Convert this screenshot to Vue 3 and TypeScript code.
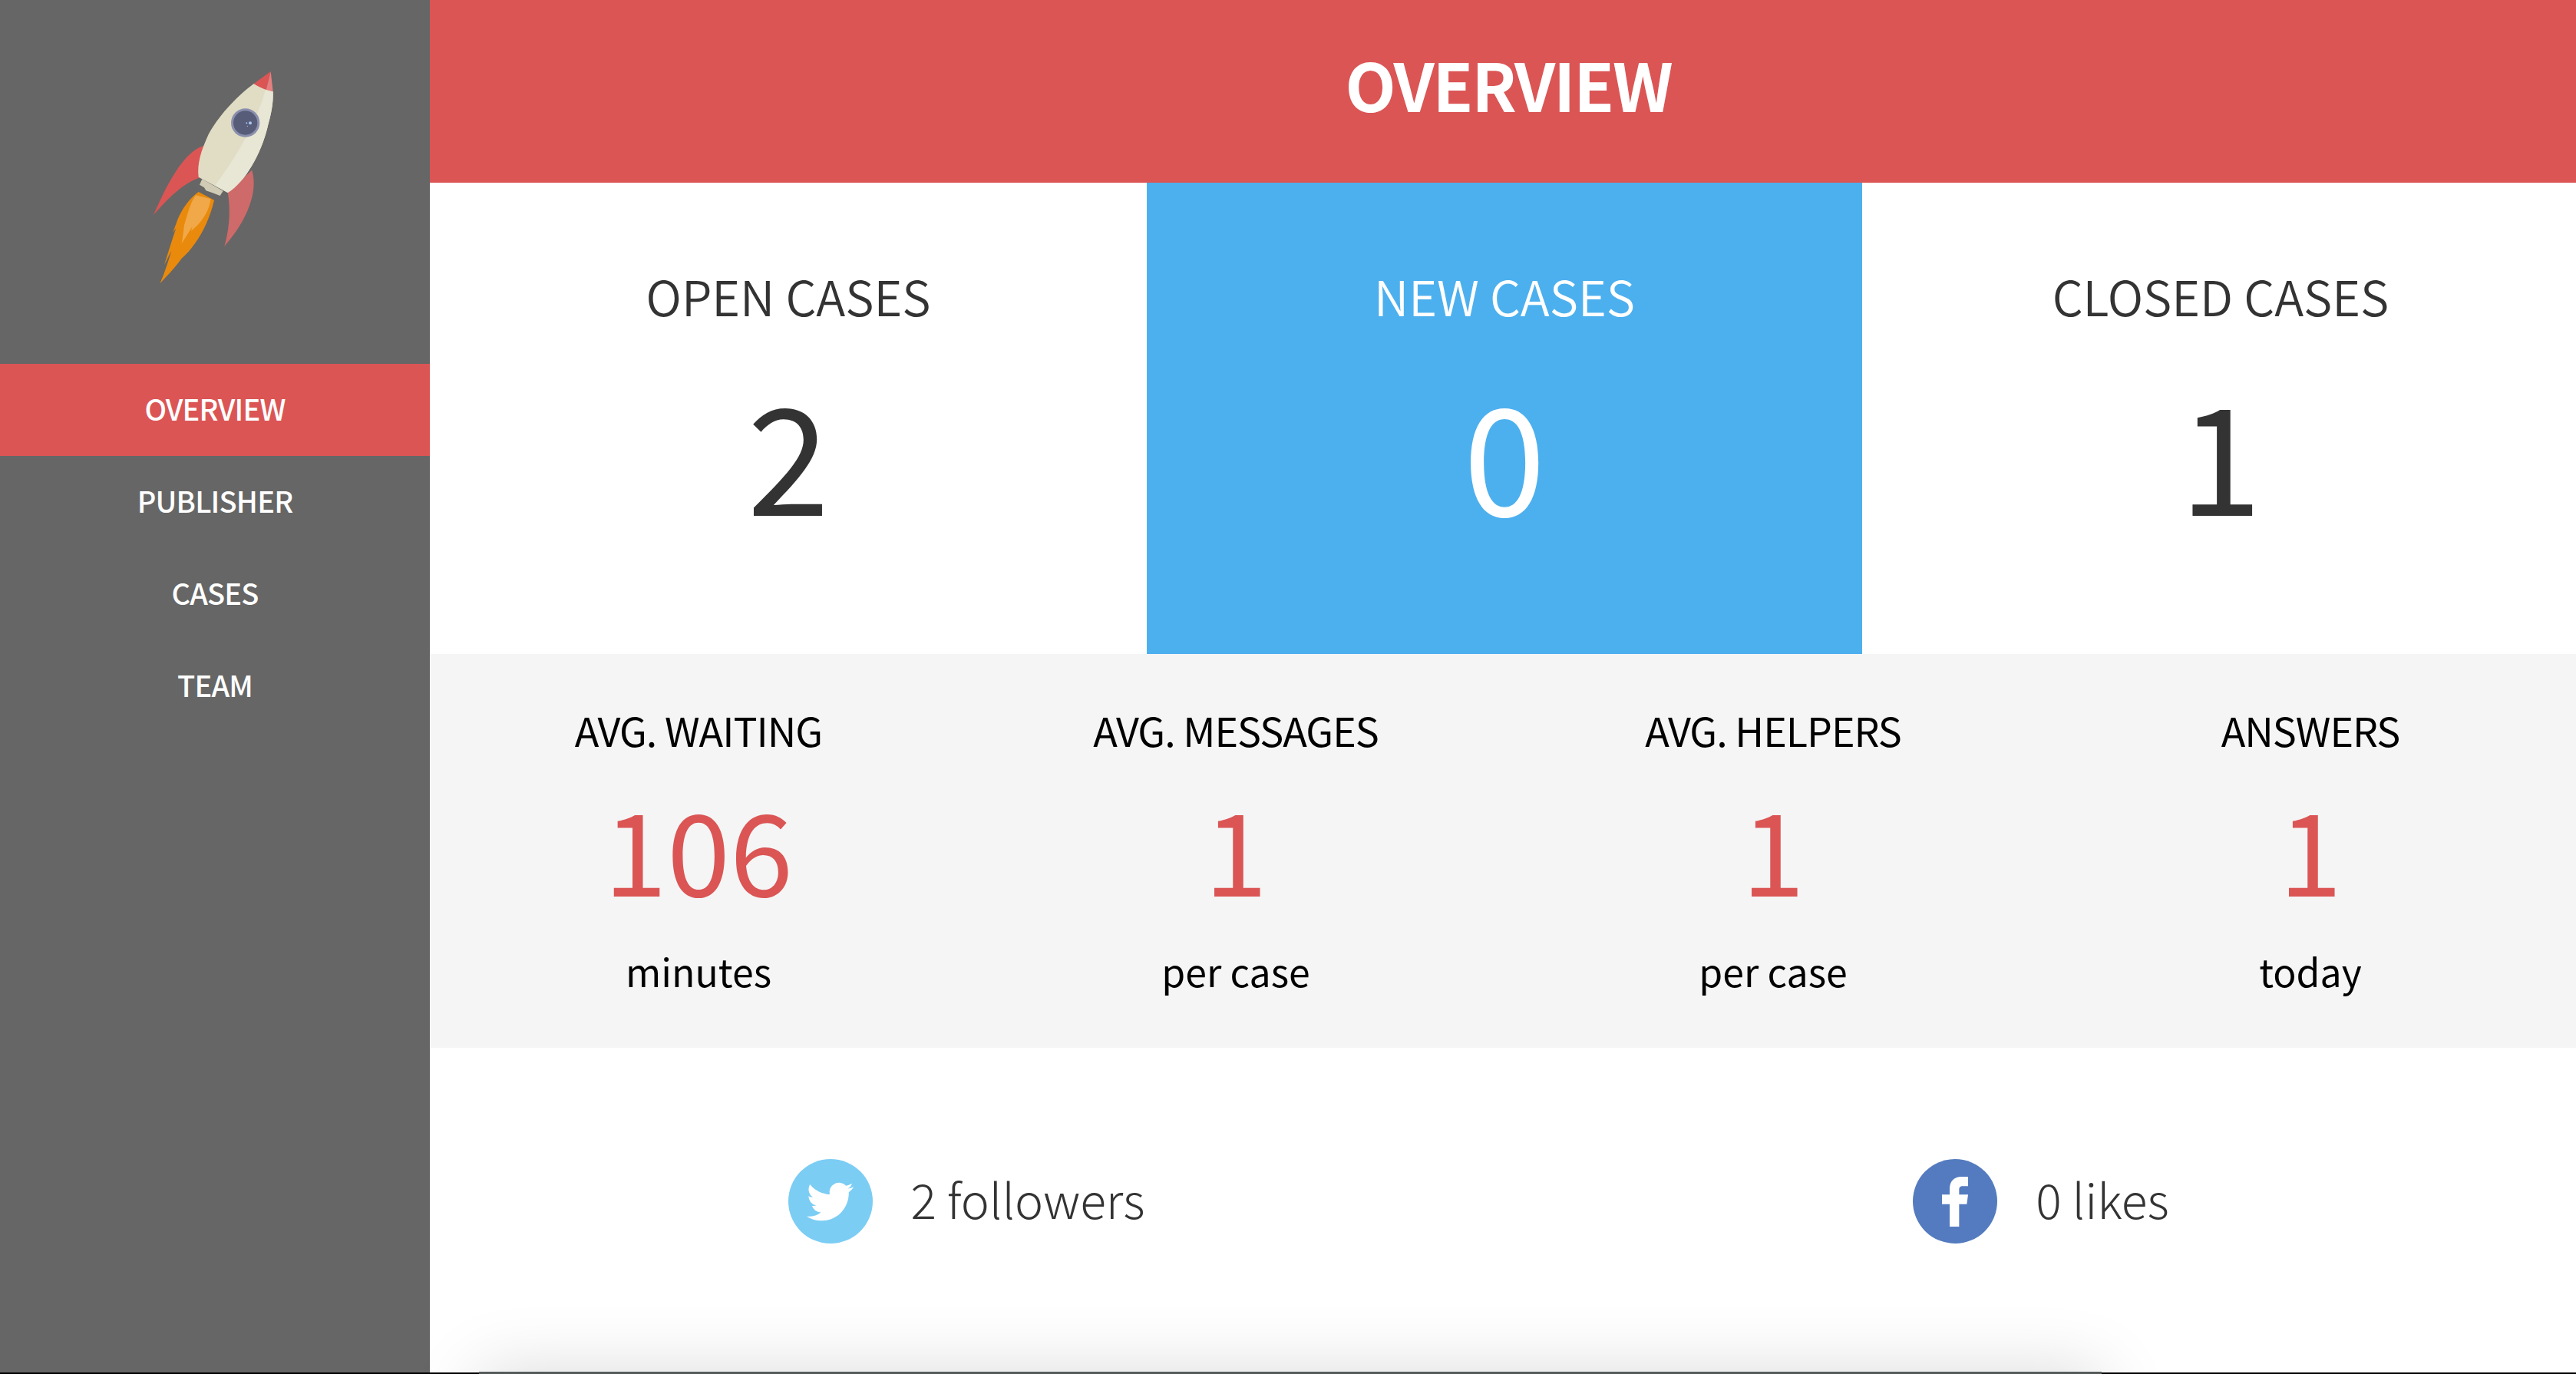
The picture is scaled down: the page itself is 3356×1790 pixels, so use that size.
<template>
  <div class="page">
    <div class="layout">
      <aside class="sidebar">
        <svg class="rocket" viewBox="0 0 840 990" width="280" height="330">
          <path d="M375 390C310 410 250 500 180 660C240 590 300 535 358 515Z" fill="#db5555" />
          <path d="M565 485C580 540 570 600 535 670C510 720 480 755 457 783C480 700 480 630 470 570Z" fill="#cf6a6a" />
          <path d="M356 570C315 600 285 645 268 695L255 730L268 712C255 750 240 800 222 855L250 800C235 850 220 895 205 928C240 890 270 860 300 815L310 785L285 835C340 790 395 700 417 602Z" fill="#e98a0c" />
          <path d="M345 583C325 610 315 650 300 700C297 725 295 745 290 772L332 705L327 722C370 690 400 640 403 597Z" fill="#f0a848" />
          <path d="M370 520L360 542L378 553L385 565L411 574L440 585L452 566Z" fill="#cfcbb5" />
          <path d="M572 147C500 200 430 280 395 345C365 410 350 460 356 512L470 573C540 530 600 420 625 320C645 250 648 215 647 178C625 170 595 160 572 147Z" fill="#e1ddc5" />
          <path d="M618 170C590 270 530 400 420 545L470 573C540 530 600 420 625 320C645 250 648 215 647 178Z" fill="#e8e6d4" />
          <path d="M638 99L572 147C590 160 605 165 620 171Z" fill="#db5555" />
          <path d="M638 99L620 171L647 178Z" fill="#e67f7f" />
          <circle cx="539" cy="300" r="56" fill="#8a8fad" />
          <circle cx="539" cy="300" r="47" fill="#575c78" />
          <circle cx="558" cy="301" r="6" fill="#a9c6f0" />
          <circle cx="544" cy="301" r="3" fill="#a9c6f0" />
          <circle cx="547" cy="313" r="2" fill="#a9c6f0" />
        </svg>
        <nav class="menu">
          <a
            v-for="item in menu"
            :key="item"
            class="menu-item"
            :class="{ active: item === 'OVERVIEW' }"
          >
            {{ item }}
          </a>
        </nav>
      </aside>

      <main class="main">
        <header class="title-bar">
          <h1>OVERVIEW</h1>
        </header>

        <section class="cases">
          <div
            v-for="c in cases"
            :key="c.label"
            class="case"
            :class="{ highlight: c.highlight }"
          >
            <div class="case-label">{{ c.label }}</div>
            <div class="case-value">{{ c.value }}</div>
          </div>
        </section>

        <section class="stats">
          <div v-for="s in stats" :key="s.label" class="stat">
            <div class="stat-label">{{ s.label }}</div>
            <div class="stat-value">{{ s.value }}</div>
            <div class="stat-unit">{{ s.unit }}</div>
          </div>
        </section>

        <section class="social">
          <div class="social-item">
            <span class="badge twitter">
              <svg viewBox="0 0 24 24" width="61" height="61" fill="#fff">
                <path d="M23.953 4.57a10 10 0 01-2.825.775 4.958 4.958 0 002.163-2.723c-.951.555-2.005.959-3.127 1.184a4.92 4.92 0 00-8.384 4.482C7.69 8.095 4.067 6.13 1.64 3.162a4.822 4.822 0 00-.666 2.475c0 1.71.87 3.213 2.188 4.096a4.904 4.904 0 01-2.228-.616v.06a4.923 4.923 0 003.946 4.827 4.996 4.996 0 01-2.212.085 4.936 4.936 0 004.604 3.417 9.867 9.867 0 01-6.102 2.105c-.39 0-.779-.023-1.17-.067a13.995 13.995 0 007.557 2.209c9.053 0 13.998-7.496 13.998-13.985 0-.21 0-.42-.015-.63A9.935 9.935 0 0024 4.59z" />
              </svg>
            </span>
            <span class="social-text">2 followers</span>
          </div>
          <div class="social-item">
            <span class="badge facebook">
              <svg viewBox="0 0 102 195" width="34" height="65" fill="#fff">
                <path d="M30 70V48C30 15 50 0 75 0H102V37H82C70 37 67 42 67 52V70H102L97 107H67V195H30V107H0V70Z" />
              </svg>
            </span>
            <span class="social-text">0 likes</span>
          </div>
        </section>

        <div class="next-panel"></div>
      </main>
    </div>
  </div>
</template>

<script setup lang="ts">
interface CaseCard {
  label: string;
  value: number;
  highlight?: boolean;
}

interface Stat {
  label: string;
  value: number;
  unit: string;
}

const menu: string[] = ["OVERVIEW", "PUBLISHER", "CASES", "TEAM"];

const cases: CaseCard[] = [
  { label: "OPEN CASES", value: 2 },
  { label: "NEW CASES", value: 0, highlight: true },
  { label: "CLOSED CASES", value: 1 },
];

const stats: Stat[] = [
  { label: "AVG. WAITING", value: 106, unit: "minutes" },
  { label: "AVG. MESSAGES", value: 1, unit: "per case" },
  { label: "AVG. HELPERS", value: 1, unit: "per case" },
  { label: "ANSWERS", value: 1, unit: "today" },
];
</script>

<style>
html,
body {
  margin: 0;
  background: #000;
}
</style>

<style scoped>
.page {
  width: 3356px;
  height: 1790px;
  overflow: hidden;
  background: #000;
  font-family: "Noto Sans CJK SC", "Noto Sans", sans-serif;
}

.layout {
  display: flex;
  height: 1788px;
}

.sidebar {
  flex: 0 0 560px;
  background: #666;
  padding-top: 60px;
  box-sizing: border-box;
}

.rocket {
  display: block;
  margin: 0 auto;
}

.menu {
  margin-top: 84px;
}

.menu-item {
  display: block;
  height: 120px;
  line-height: 115px;
  text-align: center;
  font-size: 38px;
  font-weight: 500;
  letter-spacing: -0.8px;
  color: #fff;
}

.menu-item.active {
  background: #db5555;
}

.main {
  flex: 1;
  min-width: 0;
  background: #fff;
}

.title-bar {
  height: 238px;
  background: #db5555;
  display: flex;
  align-items: center;
  justify-content: center;
}

.title-bar h1 {
  margin: 0;
  padding: 0 0 21px 14px;
  font-size: 86px;
  font-weight: 700;
  letter-spacing: -2.2px;
  line-height: 1;
  color: #fff;
}

.cases {
  display: grid;
  grid-template-columns: 934px 932px 1fr;
  height: 614px;
}

.case {
  text-align: center;
  color: #333;
  padding-top: 107px;
  box-sizing: border-box;
}

.case:last-child {
  padding-left: 4px;
}

.case.highlight {
  background: #4db0ee;
  color: #fff;
}

.case-label {
  font-size: 63px;
  font-weight: 350;
  line-height: 80px;
}

.case-value {
  margin-top: 33px;
  font-size: 193px;
  line-height: 260px;
}

.stats {
  display: grid;
  grid-template-columns: repeat(4, 700px);
  height: 513px;
  background: #f5f5f5;
  color: #000;
  text-align: center;
}

.stat {
  padding-top: 64px;
}

.stat-label {
  font-size: 52px;
  letter-spacing: -1px;
  line-height: 70px;
}

.stat-value {
  margin-top: 28px;
  font-size: 148px;
  line-height: 180px;
  color: #db5555;
}

.stat-unit {
  margin-top: 35px;
  font-size: 50px;
  line-height: 70px;
}

.social {
  display: grid;
  grid-template-columns: 1fr 1fr;
  height: 422px;
  padding-top: 145px;
  box-sizing: border-box;
}

.social-item {
  display: flex;
  justify-content: center;
  align-items: flex-start;
  gap: 50px;
}

.social-item:last-child {
  padding-left: 4px;
}

.badge {
  flex: none;
  width: 110px;
  height: 110px;
  border-radius: 50%;
  display: flex;
  align-items: center;
  justify-content: center;
}

.twitter {
  background: #7ccdf4;
}

.facebook {
  background: #547bbf;
}

.social-text {
  font-size: 62.5px;
  font-weight: 300;
  line-height: 102px;
  color: #333;
}

.next-panel {
  height: 200px;
  margin: 0 618px 0 64px;
  background: #555b5b;
  box-shadow: 0 0 90px rgba(0, 0, 0, 0.15);
}
</style>
